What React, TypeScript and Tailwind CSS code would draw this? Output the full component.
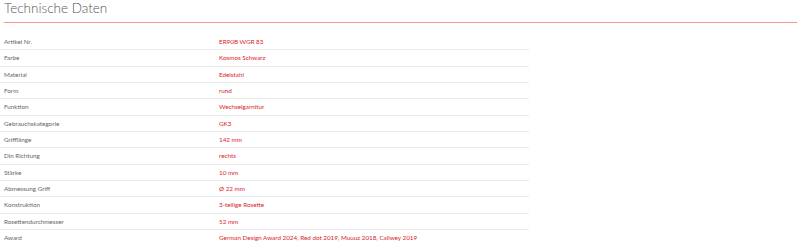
const rows: [string, string][] = [
  ["Artikel Nr.", "ER90B WGR 83"],
  ["Farbe", "Kosmos Schwarz"],
  ["Material", "Edelstahl"],
  ["Form", "rund"],
  ["Funktion", "Wechselgarnitur"],
  ["Gebrauchskategorie", "GK3"],
  ["Grifflänge", "142 mm"],
  ["Din Richtung", "rechts"],
  ["Stärke", "10 mm"],
  ["Abmessung Griff", "Ø 22 mm"],
  ["Konstruktion", "3-teilige Rosette"],
  ["Rosettendurchmesser", "52 mm"],
  ["Award", "German Design Award 2024, Red dot 2019, Muuuz 2018, Callwey 2019"],
];

export default function App() {
  return (
    <div className="w-[800px] h-[245px] overflow-hidden bg-white font-['Lato',sans-serif]">
      <div className="mx-1 w-[793px] h-[23px] border-b border-[#f39494]">
        <h2 className="text-[13.5px] leading-[13.5px] pt-[2px] font-light text-[#555]">
          Technische Daten
        </h2>
      </div>
      <div className="mt-[11px] w-[529px]">
        {rows.map(([label, value], i) => (
          <div
            key={label}
            className={`flex items-center h-[16.33px] text-[6.3px] ${
              i < rows.length - 1 ? "border-b border-[#ebebeb]" : ""
            }`}
          >
            <div className="w-[219px] pl-1 text-[#666]">{label}</div>
            <div className="flex-1 text-[#d8232a]">{value}</div>
          </div>
        ))}
      </div>
    </div>
  );
}
